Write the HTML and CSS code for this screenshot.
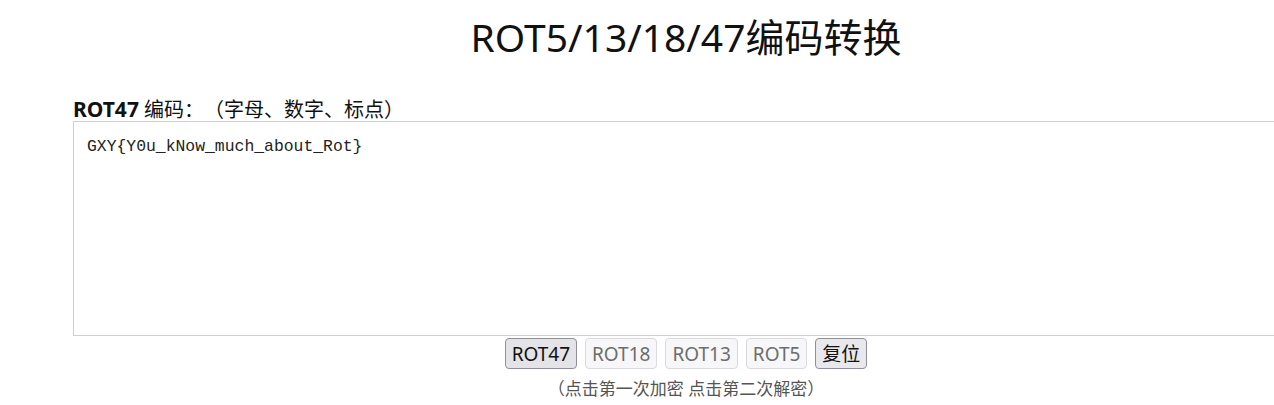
FILE: index.html
```html
<!DOCTYPE html>
<html lang="zh-CN">
<head>
<meta charset="utf-8">
<title>ROT5/13/18/47编码转换</title>
<link rel="stylesheet" href="styles.css">
</head>
<body>
<div class="page">
  <h1 class="title">ROT5/13/18/47编码转换</h1>
  <div class="label"><b>ROT47</b> 编码：（字母、数字、标点）</div>
  <textarea class="box">GXY{Y0u_kNow_much_about_Rot}</textarea>
  <div class="actions">
    <button class="btn active">ROT47</button>
    <button class="btn off">ROT18</button>
    <button class="btn off">ROT13</button>
    <button class="btn off">ROT5</button>
    <button class="btn">复位</button>
  </div>
  <div class="note">（点击第一次加密 点击第二次解密）</div>
</div>
</body>
</html>
```
FILE: styles.css
```css
html, body {
  margin: 0;
  padding: 0;
  background: #fff;
  overflow: hidden;
}
body {
  font-family: "Noto Sans", "Noto Sans CJK SC", sans-serif;
  color: #111;
  text-spacing-trim: space-all;
}
.page {
  width: 1226px;
  margin-left: 73px;
}
.title {
  margin: 0;
  padding-top: 10px;
  height: 87px;
  font-weight: 400;
  font-size: 39px;
  line-height: 54px;
  text-align: center;
  color: #111;
}
.label {
  font-size: 20px;
  line-height: 24px;
  height: 24px;
}
.label b {
  font-weight: 700;
  font-size: 21px;
}
.box {
  display: block;
  box-sizing: border-box;
  width: 100%;
  height: 215px;
  margin: 0;
  padding: 14px 13px;
  border: 1px solid #cfcfcf;
  font-family: "Liberation Mono", monospace;
  font-size: 16.4px;
  line-height: 22px;
  color: #222;
  resize: none;
  outline: none;
}
.actions {
  display: flex;
  justify-content: center;
  gap: 8px;
  padding-top: 2px;
}
.btn {
  font-family: "Noto Sans", "Noto Sans CJK SC", sans-serif;
  font-size: 19px;
  line-height: 24px;
  height: 31px;
  padding: 0 6px;
  border-radius: 4px;
  border: 1px solid #8f8f9d;
  background: #e9e9ed;
  color: #111;
}
.btn.active {
  background: #e3e3e8;
}
.btn.off {
  border-color: #dadade;
  background: #f7f7f9;
  color: #6d6d6d;
}
.note {
  text-align: center;
  font-size: 17px;
  line-height: 22px;
  padding-top: 9px;
  color: #555;
}
```
